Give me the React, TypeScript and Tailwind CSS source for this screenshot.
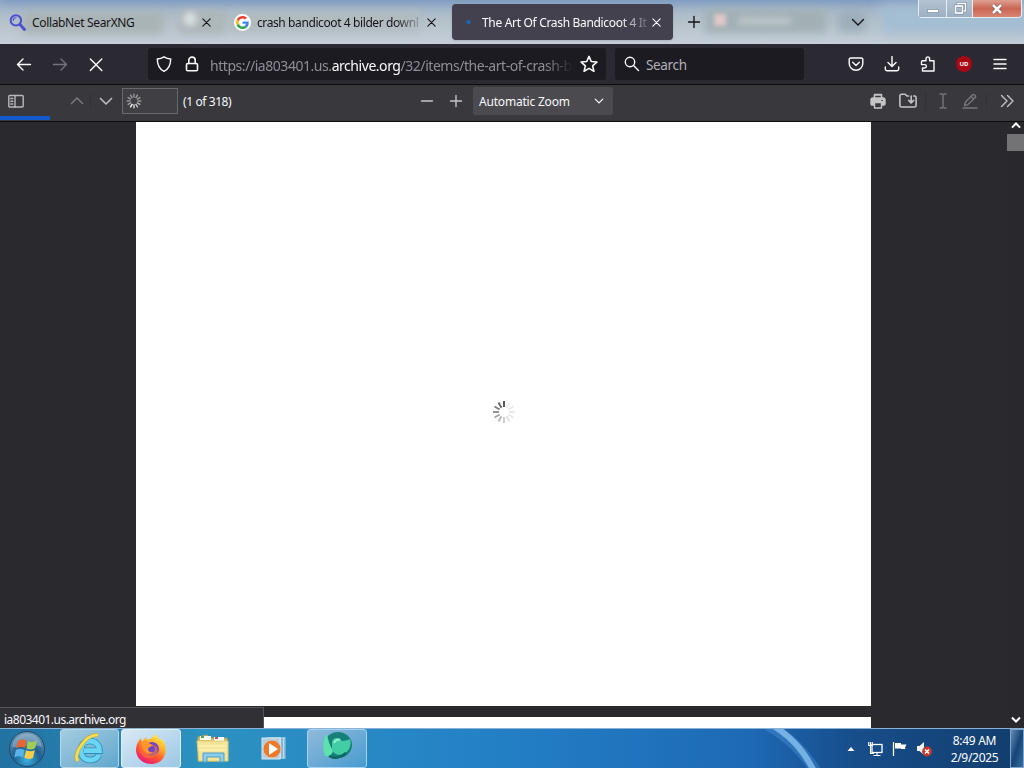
import type { ReactNode } from 'react';

interface IconProps {
  children: ReactNode;
  className?: string;
}

function Icon({ children, className = 'h-4 w-4' }: IconProps) {
  return (
    <svg
      className={`block shrink-0 ${className}`}
      viewBox="0 0 16 16"
      fill="none"
      stroke="currentColor"
      strokeWidth={1.4}
      strokeLinecap="round"
      strokeLinejoin="round"
    >
      {children}
    </svg>
  );
}

function CloseIcon({ className = 'h-4 w-4' }: { className?: string }) {
  return (
    <Icon className={className}>
      <path d="M3.500 3.500l9 9M12.500 3.500l-9 9" />
    </Icon>
  );
}

interface SpinnerProps {
  className: string;
  start: number;
  min: number;
}

function Spinner({ className, start, min }: SpinnerProps) {
  const spokes = Array.from({ length: 12 }, (_, i) => i);
  return (
    <svg className={`block shrink-0 ${className}`} viewBox="0 0 24 24" stroke="currentColor" strokeWidth={2}>
      {spokes.map((i) => (
        <path
          key={i}
          d="M12 1v6"
          opacity={Math.max(min, 1 - i * 0.12)}
          transform={`rotate(${start - i * 30} 12 12)`}
        />
      ))}
    </svg>
  );
}

function WindowButtons() {
  return (
    <div className="ml-auto mr-[2px] flex h-[18px] w-[104px] rounded-b-[4px] border border-t-0 border-[#e5eef5] text-white">
      <div className="flex w-[28px] items-center justify-center border-r border-[#e5eef5] bg-gradient-to-b from-[#b4c3d2] to-[#9cb0c3]">
        <svg width="14" height="14" viewBox="0 0 14 14">
          <rect x="1.500" y="7.500" width="11" height="3" fill="#fff" stroke="#7f90a3" strokeWidth="0.700" />
        </svg>
      </div>
      <div className="flex w-[26px] items-center justify-center border-r border-[#e5eef5] bg-gradient-to-b from-[#b4c3d2] to-[#9cb0c3]">
        <svg width="14" height="14" viewBox="0 0 14 14" fill="none">
          <path d="M5 4V1.500h7.500v7.500H10" stroke="#71839a" strokeWidth="2.600" />
          <path d="M5 4V1.500h7.500v7.500H10" stroke="#fff" strokeWidth="1.400" />
          <rect x="2.500" y="4" width="7" height="7" stroke="#71839a" strokeWidth="2.800" />
          <rect x="2.500" y="4" width="7" height="7" stroke="#fff" strokeWidth="1.700" />
        </svg>
      </div>
      <div className="flex flex-1 items-center justify-center rounded-br-[3px] bg-gradient-to-b from-[#dfa094] via-[#ca6654] to-[#d98474]">
        <svg width="14" height="12" viewBox="0 0 14 12">
          <path d="M3 2l8 8M11 2l-8 8" stroke="#85595a" strokeWidth="4" />
          <path d="M3 2l8 8M11 2l-8 8" stroke="#fff" strokeWidth="2.500" />
        </svg>
      </div>
    </div>
  );
}

function TabStrip() {
  return (
    <header className="relative flex h-[44px] shrink-0 overflow-hidden bg-gradient-to-b from-[#9db2c8] via-[#b6c2ca] to-[#c6cfd9] text-[12px] text-[#15141a]">
      {/* Shapes behind the glass frame */}
      <div className="absolute inset-0">
        <div className="absolute -top-3 left-0 h-4 w-full bg-[#7998c0] blur-[5px]" />
        <div className="absolute left-[22px] top-[12px] h-[22px] w-[142px] rounded bg-[#a9b3b5] blur-[5px]" />
        <div className="absolute left-[178px] top-[10px] h-6 w-[48px] rounded bg-[#adb6b8] blur-[4px]" />
        <div className="absolute left-[183px] top-[12px] h-[14px] w-[14px] rounded-full bg-[#d9e0e2] blur-[3px]" />
        <div className="absolute left-[230px] top-[12px] h-[20px] w-[190px] bg-[#b1bbbf] blur-[5px]" />
        <div className="absolute left-[705px] top-[9px] h-[24px] w-[122px] rounded bg-[#a2b0b5] blur-[4px]" />
        <div className="absolute left-[714px] top-[14px] h-[12px] w-[12px] bg-[#dec7c8] blur-[2px]" />
        <div className="absolute left-[738px] top-[17px] h-[8px] w-[53px] bg-[#bcc4c7] blur-[3px]" />
        <div className="absolute left-[838px] top-[10px] h-[22px] w-[28px] bg-[#9caeba] blur-[5px]" />
        <div className="absolute left-[880px] top-[4px] h-[30px] w-[154px] bg-[#a3bdd2] blur-[7px]" />
      </div>
      <div className="relative flex w-full">
        <div className="flex w-[226px] items-center pl-[9px]">
          <Icon className="h-[17px] w-[17px] text-[#4b51cf]">
            <circle cx="6.500" cy="6" r="4.900" strokeWidth="1.900" />
            <path d="M4 6c0-1.500 1-2.500 2.500-2.500" strokeWidth="1" />
            <path d="M10.500 10l4 4.500" strokeWidth="2.800" />
          </Icon>
          <span className="ml-[6px] mt-[2px] w-[168px] whitespace-nowrap tracking-[-0.35px]">CollabNet SearXNG</span>
          <CloseIcon className="h-[13px] w-[13px]" />
        </div>
        <div className="flex w-[226px] items-center pl-[8px]">
          <div className="flex h-[17px] w-[17px] items-center justify-center rounded-full bg-white">
            <svg width="13" height="13" viewBox="0 0 48 48">
              <path fill="#EA4335" d="M24 9.500c3.500 0 6.700 1.200 9.200 3.600l6.900-6.900C35.900 2.400 30.500 0 24 0 14.600 0 6.500 5.400 2.600 13.200l8 6.200C12.400 13.700 17.700 9.500 24 9.500z" />
              <path fill="#4285F4" d="M47 24.500c0-1.600-.2-3.100-.4-4.500H24v9h12.900c-.6 3-2.300 5.500-4.800 7.200l7.700 6C44.400 38 47 31.800 47 24.500z" />
              <path fill="#FBBC05" d="M10.500 28.600c-.5-1.500-.8-3-.8-4.600s.3-3.100.8-4.600l-8-6.200C.9 16.500 0 20.100 0 24s.9 7.500 2.600 10.800l7.900-6.200z" />
              <path fill="#34A853" d="M24 48c6.500 0 11.900-2.100 15.900-5.800l-7.700-6c-2.200 1.500-4.900 2.300-8.200 2.300-6.300 0-11.600-4.200-13.500-9.900l-8 6.200C6.500 42.600 14.600 48 24 48z" />
            </svg>
          </div>
          <span className="ml-[6px] mt-[2px] w-[168px] whitespace-nowrap tracking-[-0.4px] [mask-image:linear-gradient(to_right,black_138px,transparent_168px)]">
            crash bandicoot 4 bilder downl
          </span>
          <CloseIcon className="h-[13px] w-[13px]" />
        </div>
        <div className="my-[4px] flex w-[221px] items-center rounded-[4px] bg-[#42414d] pl-[11px] text-[#fbfbfe] shadow-sm">
          <div className="flex h-[10px] w-[10px] items-center justify-center">
            <div className="h-[4px] w-[5px] rounded-full bg-[#2364a5]" />
          </div>
          <span className="ml-[9px] mt-[2px] w-[168px] whitespace-nowrap tracking-[-0.32px] [mask-image:linear-gradient(to_right,black_138px,transparent_172px)]">
            The Art Of Crash Bandicoot 4 It
          </span>
          <CloseIcon className="h-[13px] w-[13px]" />
        </div>
        <div className="flex w-[42px] items-center justify-center">
          <Icon>
            <path d="M8 2.500v11M2.500 8h11" />
          </Icon>
        </div>
        <div className="ml-[128px] flex w-[30px] items-center justify-center">
          <Icon>
            <path d="M2.500 5.500L8 11l5.500-5.500" />
          </Icon>
        </div>
        <WindowButtons />
      </div>
    </header>
  );
}

function NavBar() {
  return (
    <div className="flex h-[40px] shrink-0 items-center bg-[#2b2a33] pl-[6px] text-[#fbfbfe]">
      <div className="flex w-[36px] justify-center">
        <Icon>
          <path d="M14.500 8.500H1.500M7 3L1.500 8.500 7 14" />
        </Icon>
      </div>
      <div className="flex w-[36px] justify-center text-[#74737c]">
        <Icon>
          <path d="M1.500 8.500h13M9 3l5.500 5.500L9 14" />
        </Icon>
      </div>
      <div className="flex w-[36px] justify-center">
        <Icon>
          <path d="M2.300 3l11.500 11.500M13.800 3L2.300 14.500" />
        </Icon>
      </div>
      <div className="ml-[34px] flex h-[32px] w-[458px] items-center rounded-[3px] bg-[#1c1b22] pl-[8px]">
        <Icon>
          <path d="M8 .8c2 1.300 4 2 6.700 2.200C14.700 9 13 13 8 15.300 3 13 1.300 9 1.300 3 4 2.800 6 2.100 8 .8z" />
        </Icon>
        <Icon className="ml-[12px] h-4 w-4">
          <rect x="2.500" y="7.500" width="11" height="7.300" rx="1.300" strokeWidth="1.600" />
          <path d="M4.800 7.500V4.300a3.200 3.200 0 016.400 0v3.200" strokeWidth="1.600" />
        </Icon>
        <span className="ml-[10px] mt-[2px] w-[361px] whitespace-nowrap text-[14px] tracking-[-0.45px] text-[#8f8e98] [mask-image:linear-gradient(to_right,black_335px,transparent_363px)]">
          https://ia803401.us.<span className="text-[#fbfbfe]">archive.org</span>/32/items/the-art-of-crash-b
        </span>
        <Icon className="ml-[9px] h-[18px] w-[18px]">
          <path d="M8 1.200l2 4.600 5 .5-3.800 3.300 1.200 4.900L8 11.900l-4.400 2.600 1.200-4.900L1 6.300l5-.5z" />
        </Icon>
      </div>
      <div className="ml-[9px] flex h-[32px] w-[189px] items-center rounded-[3px] bg-[#1c1b22] pl-[9px]">
        <Icon>
          <circle cx="6" cy="6" r="4.700" />
          <path d="M9.500 9.500l5 5" />
        </Icon>
        <span className="ml-[6px] mt-[3px] text-[13.5px] tracking-[-0.35px] text-[#b2b1b8]">Search</span>
      </div>
      <div className="ml-[34px] flex">
        <div className="flex w-[36px] justify-center">
          <Icon>
            <path d="M2.500 2h11A1.300 1.300 0 0114.800 3.300V7.500a6.800 6.800 0 01-13.600 0V3.300A1.300 1.300 0 012.500 2z" />
            <path d="M4.700 6.300L8 9.400l3.300-3.100" />
          </Icon>
        </div>
        <div className="flex w-[36px] justify-center">
          <Icon>
            <path d="M8 .5v9.500M4 6.500l4 4 4-4M1.300 11v2c0 1 .7 1.700 1.700 1.700h10c1 0 1.700-.7 1.700-1.700v-2" />
          </Icon>
        </div>
        <div className="flex w-[36px] justify-center">
          <Icon>
            <path d="M2.500 4.800H6V2.700a1.800 1.800 0 013.600 0v2.100H14V15H2.500v-3h2.200a1.700 1.700 0 000-3.400H1.500V5.800c0-.6.400-1 1-1z" />
          </Icon>
        </div>
        <div className="flex w-[36px] justify-center">
          <div className="flex h-4 w-4 items-center justify-center rounded-full bg-[#a90814] text-[6px] font-bold leading-none text-white">
            UD
          </div>
        </div>
        <div className="flex w-[36px] justify-center">
          <Icon>
            <path d="M2 3.500h12M2 8h12M2 12.500h12" />
          </Icon>
        </div>
      </div>
    </div>
  );
}

function PdfToolbar() {
  return (
    <div className="relative flex h-[38px] shrink-0 items-start border-b border-t border-[#0c0c0d] bg-[#38383d] text-[12px] text-[#f9f9fa]">
      <div className="flex h-[32px] w-full items-center">
        <div className="flex w-[32px] justify-center text-[#b9b9bd]">
          <Icon>
            <rect x="0.800" y="2.500" width="14.400" height="11.500" rx="1" />
            <path d="M7 2.500V14M2.800 5.500h2M2.800 8.200h2M2.800 11h2" />
          </Icon>
        </div>
        <div className="ml-[31px] flex w-[28px] justify-center border-r border-[#323237] text-[#77777b]">
          <Icon>
            <path d="M2.500 10.500L8 5l5.500 5.500" strokeWidth="1.700" />
          </Icon>
        </div>
        <div className="flex w-[30px] justify-center text-[#b9b9bd]">
          <Icon>
            <path d="M2.500 5.500L8 11l5.500-5.500" strokeWidth="1.700" />
          </Icon>
        </div>
        <div className="ml-[1px] flex h-[26px] w-[56px] items-center border border-[#68686d] bg-[#404044] pl-[3px]">
          <Spinner className="h-4 w-4" start={210} min={0.5} />
        </div>
        <span className="ml-[5px] mt-[1px] w-[229px] whitespace-nowrap tracking-[-0.4px]">(1 of 318)</span>
        <div className="flex w-[30px] justify-center text-[#c5c5c8]">
          <Icon>
            <path d="M2.500 8h11" />
          </Icon>
        </div>
        <div className="flex w-[28px] justify-center text-[#c5c5c8]">
          <Icon>
            <path d="M8 2.500v11M2.500 8h11" />
          </Icon>
        </div>
        <div className="ml-[3px] flex h-[28px] w-[140px] items-center justify-between rounded-[2px] bg-[#4a4a4f] pl-[6px] pr-[8px]">
          <span className="mt-[1px] whitespace-nowrap tracking-[-0.2px]">Automatic Zoom</span>
          <Icon className="h-[12px] w-[12px]">
            <path d="M3 5.500l5 5 5-5" strokeWidth="1.700" />
          </Icon>
        </div>
        <div className="ml-auto flex items-center text-[#c5c5c8]">
          <div className="flex w-[30px] justify-center">
            <Icon>
              <path d="M4.500 5V1.500h7V5M4.500 12H2.200C1.500 12 1 11.500 1 10.800V7c0-1.100.9-2 2-2h10c1.100 0 2 .9 2 2v3.800c0 .7-.5 1.200-1.200 1.200h-2.300z" fill="currentColor" />
              <rect x="4.500" y="2" width="7" height="3" fill="#38383d" />
              <rect x="4.500" y="9.500" width="7" height="5.500" fill="#38383d" />
              <path d="M12 7.500h.1" stroke="#38383d" />
            </Icon>
          </div>
          <div className="flex w-[33px] justify-center border-r border-[#313136] pr-[2px]">
            <Icon className="h-[18px] w-[18px]">
              <path d="M8.500 3.500H7L5.500 2H2.200c-.8 0-1.400.6-1.400 1.400V12c0 .8.600 1.400 1.400 1.400h11.600c.8 0 1.400-.6 1.400-1.400V4.900c0-.8-.6-1.400-1.400-1.400H13" />
              <path d="M10.800 3.500v6M8.500 7.300l2.300 2.400 2.300-2.400" />
            </Icon>
          </div>
          <div className="flex w-[32px] justify-center pl-[2px] text-[#77777b]">
            <Icon>
              <path d="M5 1h2l1 .7L9 1h2M8 2v12M5 15h2l1-.7 1 .7h2" />
            </Icon>
          </div>
          <div className="flex w-[29px] justify-center border-r border-[#313136] pr-[4px] text-[#77777b]">
            <Icon>
              <path d="M2.500 12.500l1-3.500L10.500 1.800c.5-.5 1.200-.5 1.700 0l1 1c.5.500.5 1.200 0 1.700L6 11.600zM9 3.300l2.700 2.700M1 15h14" />
            </Icon>
          </div>
          <div className="flex w-[37px] justify-center pl-[3px]">
            <Icon>
              <path d="M2.500 2.500L8 8l-5.500 5.500M8.500 2.500L14 8l-5.500 5.500" />
            </Icon>
          </div>
        </div>
      </div>
      {/* Loading progress */}
      <div className="absolute bottom-[1px] left-0 h-[4px] w-[50px] bg-[#1259cb]" />
    </div>
  );
}

function Viewer() {
  return (
    <main className="relative flex h-[606px] shrink-0 overflow-hidden bg-[#2a2a2e]">
      <div className="ml-[136px] flex w-[735px] flex-col gap-[11px]">
        <div className="flex h-[584px] shrink-0 items-center justify-center bg-white">
          <Spinner className="mt-[-4px] h-6 w-6 text-[#555]" start={0} min={0.12} />
        </div>
        <div className="h-[11px] shrink-0 bg-white" />
      </div>
      <div className="ml-auto flex w-[17px] flex-col items-center bg-[#29292d] text-white">
        <Icon className="mt-[-3px] h-[12px] w-[12px]">
          <path d="M3.500 10.500L8 6l4.500 4.500" strokeWidth="2.600" strokeLinecap="square" strokeLinejoin="miter" />
        </Icon>
        <div className="mt-[3px] h-[17px] w-full bg-[#737375]" />
        <Icon className="mb-[2px] mt-auto h-[12px] w-[12px]">
          <path d="M3.500 5.500L8 10l4.500-4.500" strokeWidth="2.600" strokeLinecap="square" strokeLinejoin="miter" />
        </Icon>
      </div>
      {/* Link target shown while the page loads */}
      <div className="absolute bottom-0 left-0 flex h-[21px] w-[264px] items-center border-r border-t border-[#55545b] bg-[#313035] pl-[4px] pt-[3px] text-[12px] tracking-[-0.52px] text-[#fbfbfe]">
        ia803401.us.archive.org
      </div>
    </main>
  );
}

function StartOrb() {
  return (
    <svg className="block h-[38px] w-[38px]" viewBox="0 0 38 38">
      <defs>
        <radialGradient id="orb" cx="50%" cy="80%" r="75%">
          <stop offset="0" stopColor="#38b4e4" />
          <stop offset="0.500" stopColor="#205f91" />
          <stop offset="1" stopColor="#6895b3" />
        </radialGradient>
      </defs>
      <circle cx="19" cy="19" r="17.500" fill="url(#orb)" stroke="#214866" />
      <path d="M4 17C7-1 31-1 34 17c-9-4-20 1-30 0z" fill="#fff" opacity="0.250" />
      <path d="M10 11c3-2 5.500-2 8.500-.5L17 18c-3-1.500-5.500-1.300-8.700.2z" fill="#e86530" />
      <path d="M20 11c3 1.500 5.500 1.300 9-.5l-1.900 7.700c-3 1.700-5.500 1.700-8.700.2z" fill="#a1cd55" />
      <path d="M7.800 20c3-1.500 5.500-1.500 8.700-.1L15 27.300c-3-1.500-5.500-1.400-8.700.1z" fill="#58b4e8" />
      <path d="M18 20.300c3 1.500 5.500 1.400 8.900-.2L25 27.700c-3 1.700-5.500 1.500-8.700.1z" fill="#f8cb48" />
    </svg>
  );
}

function InternetExplorerIcon() {
  return (
    <svg className="block h-[34px] w-[34px]" viewBox="0 0 34 34" fill="none">
      <path d="M26 23c-1.500 3-5 5-9 5-5.500 0-9-4-9-9.500S11.500 9 17 9s9.500 4 9.500 9.700H11" stroke="#2b8fbe" strokeWidth="6.500" />
      <path d="M26 23c-1.500 3-5 5-9 5-5.500 0-9-4-9-9.500S11.500 9 17 9s9.500 4 9.500 9.700H11" stroke="#6bd6f4" strokeWidth="4.800" />
      <path d="M5 29C-1 24 12 2 25 3" stroke="#cfa823" strokeWidth="3.800" />
      <path d="M5 29C-1 24 12 2 25 3" stroke="#f5df56" strokeWidth="2.500" />
    </svg>
  );
}

function FirefoxIcon() {
  return (
    <svg className="block h-[32px] w-[32px]" viewBox="0 0 32 32">
      <defs>
        <linearGradient id="fox" x1="0.800" y1="0" x2="0.200" y2="1">
          <stop offset="0" stopColor="#fff44f" />
          <stop offset="0.350" stopColor="#ffad25" />
          <stop offset="0.650" stopColor="#ff4b36" />
          <stop offset="1" stopColor="#e31587" />
        </linearGradient>
      </defs>
      <path d="M20 1c3 3 4 4 5 6l2-1c4 5 5 12 2 18-3 5-8 7-13 7C8 31 1 25 1 17c0-5 2-9 5-12l1 4 4-5 1 3c3-1 7-3 8-6z" fill="url(#fox)" />
      <circle cx="17" cy="16" r="7" fill="#7543cb" />
      <path d="M4 10c4-3 8-1 10 1l4 1c-1 3-5 1-5 5 0 2 3 4 5 2 3-2 2-5-1-7 5 0 7 5 5 9-3 5-11 6-15 1-3-3-4-7-3-12z" fill="#ff8129" opacity="0.550" />
      <path d="M6 9c4-2 7-1 9 2l3 1c-1 2-5 1-5 4 0 2 2 4 5 3-4 4-11 1-12-10z" fill="#ff972c" />
    </svg>
  );
}

function ExplorerIcon() {
  return (
    <svg className="block h-[30px] w-[34px]" viewBox="0 0 34 30">
      <path d="M2 3l9-2 3 3h17v23H2z" fill="#d5ba62" stroke="#b1a35e" />
      <path d="M4 2h11v4H4zM18 3h10v4H18z" fill="#fff" />
      <path d="M5 2h3v2H5z" fill="#56a844" />
      <path d="M19 3h3v2h-3z" fill="#cf5343" />
      <path d="M1 7h31v20H3z" fill="#f3e69b" stroke="#e1cc71" />
      <path d="M3 12h27M3 16h27" stroke="#fff5bd" />
      <path d="M7 28V19h21v9h-4v-5H11v5z" fill="#8dcdec" stroke="#4f9fc4" />
    </svg>
  );
}

function MediaPlayerIcon() {
  return (
    <svg className="block h-[26px] w-[28px]" viewBox="0 0 28 26">
      <rect x="8" y="2" width="17" height="20" fill="#bcdaf0" stroke="#e8f6ff" />
      <path d="M22 2v20M25 2v20" stroke="#4f91bf" />
      <rect x="2" y="2" width="18" height="21" fill="#b5cddd" stroke="#d9e8f0" />
      <circle cx="12" cy="13" r="9" fill="#ef7928" stroke="#c8cfd2" />
      <path d="M9 7l9 6-9 6z" fill="#fff" />
    </svg>
  );
}

function GreenOrbIcon() {
  return (
    <svg className="mb-[5px] block h-[30px] w-[34px]" viewBox="0 0 34 30">
      <ellipse cx="18" cy="14" rx="14" ry="13" fill="#17807a" />
      <path d="M7 3C2 8 3 20 5 25c4 1 7-1 8-5-3-5-5-11-6-17z" fill="#5de2ad" />
      <path d="M12 11c1-5 7-5 10-1 3 0 6-1 8-2 2 6-1 13-7 15-5 2-9 0-11-4z" fill="#43cda5" />
      <path d="M14 12c1-3 4-4 6-3" stroke="#8ff0cf" fill="none" strokeWidth="2" />
      <path d="M9 25c5 3 12 2 17-3" fill="none" stroke="#0b6963" strokeWidth="2.500" />
    </svg>
  );
}

function SystemTray() {
  return (
    <div className="relative ml-auto flex items-center text-white">
      <svg className="block" width="8" height="6" viewBox="0 0 8 6">
        <path d="M4 1l3.500 4h-7z" fill="#fff" />
      </svg>
      <svg className="ml-[13px] block" width="16" height="16" viewBox="0 0 16 16" fill="none" stroke="#fff">
        <rect x="4" y="3.500" width="10" height="8" strokeWidth="1.300" />
        <path d="M.7 1v3.500h3.600V1M2.500 1v11.500H6M9 12v2.500M5.500 14.500h7" strokeWidth="1.100" />
      </svg>
      <svg className="ml-[8px] block" width="16" height="16" viewBox="0 0 16 16">
        <path d="M1.500 1v14" stroke="#fff" strokeWidth="1.300" />
        <path d="M3 2h6v1.500h5.500L13 6.500l.5 1.500H9V7.500H3z" fill="#fff" />
      </svg>
      <svg className="ml-[8px] block" width="16" height="16" viewBox="0 0 16 16">
        <path d="M1 5h2.500L8 1v13L3.500 10H1z" fill="#f1f5f9" />
        <circle cx="11" cy="10.500" r="4.900" fill="#ca3829" />
        <path d="M9 8.500l4 4M13 8.500l-4 4" stroke="#fff" strokeWidth="1.600" />
      </svg>
      <div className="ml-[8px] flex w-[69px] flex-col items-center text-[12px] leading-[17px] tracking-[-0.3px]">
        <span>8:49 AM</span>
        <span>2/9/2025</span>
      </div>
      <div className="ml-[1px] h-[39px] w-[14px] border border-[#7ea6cc] bg-gradient-to-br from-[#648db7] via-[#164476] to-[#376d9c]" />
    </div>
  );
}

function Taskbar() {
  return (
    <footer className="relative flex h-[40px] shrink-0 items-center overflow-hidden border-t border-[#8bb2d5] bg-[linear-gradient(to_right,#2272a2_0,#2c92c0_200px,#2888c6_380px,#227cc4_540px,#1e69b6_750px,#174e8b_850px,#123d6c_1024px)]">
      {/* Light streak of the wallpaper */}
      <svg className="absolute inset-0" width="1024" height="40" viewBox="0 0 1024 40">
        <path d="M768-4c22 13 36 27 49 48" fill="none" stroke="#559ee1" strokeWidth="11" opacity="0.350" />
        <path d="M772-4c20 12 32 26 43 48" fill="none" stroke="#8cc5f3" strokeWidth="6" opacity="0.750" />
      </svg>
      <div className="relative flex h-full items-center">
        <div className="flex w-[60px] justify-start pl-[8px]">
          <StartOrb />
        </div>
        <div className="flex h-[39px] w-[59px] items-center justify-center rounded-[3px] border border-[#b5d7e7] bg-gradient-to-br from-[#a4ccdf] to-[#5fa7cd]">
          <InternetExplorerIcon />
        </div>
        <div className="ml-[2px] flex h-[39px] w-[60px] items-center justify-center rounded-[3px] border border-[#e3f0fa] bg-gradient-to-br from-[#d9e9f5] to-[#9bc7e5]">
          <FirefoxIcon />
        </div>
        <div className="flex w-[64px] justify-center">
          <ExplorerIcon />
        </div>
        <div className="flex w-[57px] justify-center">
          <MediaPlayerIcon />
        </div>
        <div className="ml-[5px] flex h-[39px] w-[60px] items-center justify-center rounded-[3px] border border-[#a2d3f2] bg-gradient-to-br from-[#8fbad9] to-[#459bd0]">
          <GreenOrbIcon />
        </div>
      </div>
      <SystemTray />
    </footer>
  );
}

export default function App() {
  return (
    <div className="flex h-[768px] w-[1024px] flex-col overflow-hidden bg-[#2a2a2e] font-['Noto_Sans','Open_Sans',sans-serif]">
      <TabStrip />
      <NavBar />
      <PdfToolbar />
      <Viewer />
      <Taskbar />
    </div>
  );
}
